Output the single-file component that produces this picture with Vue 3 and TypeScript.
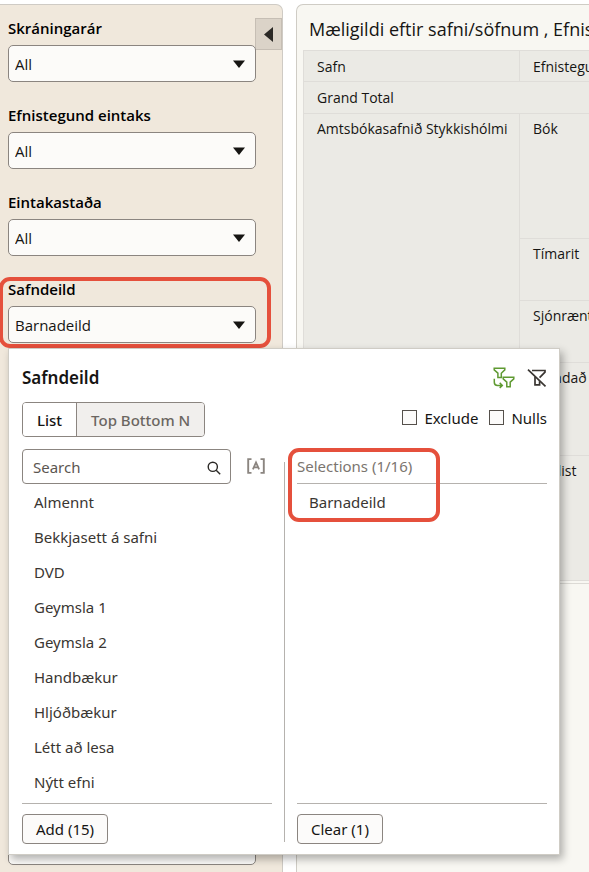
<script setup lang="ts">
import { ref } from 'vue'

interface Filter {
  id: string
  label: string
  value: string
}

interface MaterialRow {
  name: string
  span: number
}

const filters: Filter[] = [
  { id: 'year', label: 'Skráningarár', value: 'All' },
  { id: 'material', label: 'Efnistegund eintaks', value: 'All' },
  { id: 'status', label: 'Eintakastaða', value: 'All' },
]

const materials: MaterialRow[] = [
  { name: 'Bók', span: 4 },
  { name: 'Tímarit', span: 2 },
  { name: 'Sjónrænt', span: 2 },
  { name: 'Blandað efni', span: 3 },
  { name: 'Tónlist', span: 4 },
]

const available: string[] = [
  'Almennt',
  'Bekkjasett á safni',
  'DVD',
  'Geymsla 1',
  'Geymsla 2',
  'Handbækur',
  'Hljóðbækur',
  'Létt að lesa',
  'Nýtt efni',
]

const search = ref('')
const exclude = ref(false)
const nulls = ref(false)
const mode = ref<'list' | 'top'>('list')
</script>

<template>
  <div class="page">
    <aside class="sidebar">
      <button class="collapse" type="button" aria-label="Collapse">
        <svg width="9" height="15" viewBox="0 0 9 15"><path d="M9 0v15L0 7.5z" fill="#2b2926" /></svg>
      </button>

      <div v-for="f in filters" :key="f.id" class="field">
        <label :for="f.id">{{ f.label }}</label>
        <div class="select">
          <select :id="f.id">
            <option>{{ f.value }}</option>
          </select>
          <svg width="12" height="8" viewBox="0 0 12 8"><path d="M0 0.5h12L6 8z" fill="#161513" /></svg>
        </div>
      </div>

      <div class="field active">
        <label for="section">Safndeild</label>
        <div class="select">
          <select id="section">
            <option>Barnadeild</option>
          </select>
          <svg width="12" height="8" viewBox="0 0 12 8"><path d="M0 0.5h12L6 8z" fill="#161513" /></svg>
        </div>

        <section class="popover">
          <header class="pop-head">
            <h2>Safndeild</h2>
            <div class="tools">
              <button type="button" aria-label="Limit values">
                <svg width="22" height="22" viewBox="0 0 22 22" fill="none" stroke="#5f9a32" stroke-width="1.5">
                  <path d="M1.2 1.3h10.6v1.6L8.3 6.2v4.4H4.9V6.2L1.2 2.9z" />
                  <path d="M10.2 10.3h10.6v1.6l-3.6 3.3v4.6h-3.4v-4.6l-3.6-3.3z" />
                  <path d="M1.3 11.8v3.4q0 3.2 3.2 3.2h4.6M6.7 15.9l2.6 2.5-2.6 2.5" />
                </svg>
              </button>
              <button type="button" aria-label="Disable filter">
                <svg width="20" height="20" viewBox="0 0 20 20" fill="none" stroke="#3a3632" stroke-width="1.7">
                  <path d="M5 2.5h13v1.6l-5.4 5.6" />
                  <path d="M8 8.8v8.1h4.6v-3.6" />
                  <path d="M1 1.6l17.5 16.8" />
                </svg>
              </button>
            </div>
          </header>

          <div class="options">
            <div class="toggle">
              <button type="button" :class="{ on: mode === 'list' }" @click="mode = 'list'">List</button>
              <button type="button" :class="{ on: mode === 'top' }" @click="mode = 'top'">Top Bottom N</button>
            </div>
            <div class="checks">
              <label><input v-model="exclude" type="checkbox" />Exclude</label>
              <label><input v-model="nulls" type="checkbox" />Nulls</label>
            </div>
          </div>

          <div class="columns">
            <div class="column">
              <div class="search-row">
                <div class="search">
                  <input v-model="search" type="text" placeholder="Search" aria-label="Search" />
                  <svg width="14" height="14" viewBox="0 0 14 14" fill="none" stroke="#2b2926" stroke-width="1.4">
                    <circle cx="5.8" cy="5.8" r="4.6" />
                    <path d="M9.2 9.2l4 4" />
                  </svg>
                </div>
                <button class="match" type="button" aria-label="Match case">
                  <svg width="18" height="16" viewBox="0 0 18 16" fill="none" stroke="#8b8580">
                    <path d="M4.5 1.1H1.2v13.8h3.3M13.5 1.1h3.3v13.8h-3.3" stroke-width="1.9" />
                    <path d="M5.9 11.4L9 4.4l3.1 7M7 9.3h4" stroke-width="1.8" />
                  </svg>
                </button>
              </div>
              <ul class="list">
                <li v-for="item in available" :key="item">{{ item }}</li>
              </ul>
              <button class="action" type="button">Add (15)</button>
            </div>
            <div class="divider"></div>
            <div class="column">
              <h3>Selections (1/16)</h3>
              <ul class="list">
                <li>Barnadeild</li>
              </ul>
              <button class="action" type="button">Clear (1)</button>
              <span class="mark mark-selection"></span>
            </div>
          </div>
        </section>
        <span class="mark mark-field"></span>
      </div>

      <div class="select last">
        <select aria-label="Filter">
          <option></option>
        </select>
      </div>
    </aside>

    <main class="report">
      <h1>Mæligildi eftir safni/söfnum , Efnistegund</h1>
      <div class="table-wrap">
        <table>
          <thead>
            <tr>
              <th class="lib">Safn</th>
              <th>Efnistegund</th>
            </tr>
          </thead>
          <tbody>
            <tr>
              <td colspan="2">Grand Total</td>
            </tr>
            <tr v-for="(m, i) in materials" :key="m.name" class="group" :class="'rows-' + m.span">
              <td v-if="i === 0" :rowspan="materials.length">Amtsbókasafnið Stykkishólmi</td>
              <td>{{ m.name }}</td>
            </tr>
          </tbody>
        </table>
      </div>
    </main>
  </div>
</template>

<style>
body {
  background: #fff;
}
</style>

<style scoped>
* {
  box-sizing: border-box;
}

.page {
  display: flex;
  gap: 13px;
  min-height: 100vh;
  padding-top: 4px;
  overflow: hidden;
  font-family: 'Open Sans', 'Noto Sans', sans-serif;
  font-size: 14px;
  color: #161513;
}

button,
input,
select {
  font: inherit;
  color: inherit;
  margin: 0;
}

button {
  padding: 0;
  border: 0;
  background: none;
  cursor: pointer;
}

h1,
h2,
h3,
ul {
  margin: 0;
  padding: 0;
}

svg {
  display: block;
}

.sidebar {
  position: relative;
  flex: none;
  display: flex;
  flex-direction: column;
  gap: 20px;
  width: 283px;
  padding: 10px 26px 7px 8px;
  background: #f0e8dc;
  border: 1px solid #cfcbc5;
  border-width: 1px 1px 0 0;
  border-radius: 0 7px 0 0;
}

.collapse {
  position: absolute;
  top: 13px;
  right: 0;
  display: grid;
  place-items: center;
  width: 27px;
  height: 32px;
  background: #dbd3c8;
  border: 1px solid #c6beb4;
}

.field {
  position: relative;
}

.field > label {
  display: block;
  height: 30px;
  line-height: 26px;
  font-size: 15px;
  font-weight: 600;
  color: #000;
}

.select {
  display: grid;
  align-items: center;
}

.select > * {
  grid-area: 1 / 1;
}

.select > svg {
  justify-self: end;
  margin-right: 11px;
  pointer-events: none;
}

.select select {
  appearance: none;
  width: 100%;
  height: 37px;
  padding: 0 30px 0 6px;
  font-size: 15px;
  background: #fcfbf9;
  border: 1px solid #8b8580;
  border-radius: 5px;
}

.last {
  margin-top: auto;
}

.mark {
  position: absolute;
  border: 4px solid #e5503c;
  border-radius: 11px;
  pointer-events: none;
}

.mark-field {
  inset: 1px -15px -5px -9px;
}

.mark-selection {
  top: -1px;
  left: -9px;
  width: 152px;
  height: 74px;
}

.popover {
  position: absolute;
  z-index: 2;
  top: 100%;
  left: 0;
  width: calc(100vw - 37px);
  max-width: 552px;
  margin-top: 5px;
  padding: 16px 12px 10px 13px;
  font-family: 'Noto Sans', 'Open Sans', sans-serif;
  background: #fff;
  border: 1px solid #cfccc5;
  box-shadow: 3px 4px 8px rgba(0, 0, 0, 0.3);
}

.pop-head {
  display: flex;
  align-items: center;
  justify-content: space-between;
  height: 26px;
}

h2 {
  font-size: 17px;
  font-weight: 600;
  line-height: 26px;
}

.tools {
  display: flex;
  align-items: center;
  gap: 12px;
}

.options {
  display: flex;
  align-items: center;
  justify-content: space-between;
  margin: 11px 0 12px;
}

.toggle {
  display: flex;
  height: 35px;
  border: 1px solid #8b8580;
  border-radius: 4px;
  overflow: hidden;
}

.toggle button {
  padding: 0 14px;
  font-size: 15px;
  font-weight: 500;
  color: #6b6661;
  background: #f1efed;
}

.toggle button + button {
  border-left: 1px solid #8b8580;
}

.toggle .on {
  color: #161513;
  background: #fff;
}

.checks {
  display: flex;
  gap: 11px;
  margin-bottom: 4px;
  font-size: 15px;
}

.checks label {
  display: flex;
  align-items: center;
  gap: 7px;
}

.checks input {
  appearance: none;
  width: 15px;
  height: 15px;
  background: #fcfbfa;
  border: 1px solid #55504b;
}

.checks input:checked {
  background: #55504b;
}

.columns {
  display: grid;
  grid-template-columns: 1fr 1px 1fr;
  gap: 12px;
}

.column {
  position: relative;
  min-width: 0;
}

.divider {
  margin: 13px 0 2px;
  background: #b5b2ae;
}

.search-row {
  display: flex;
  align-items: center;
  gap: 16px;
}

.search {
  display: grid;
  flex: 1;
  align-items: center;
}

.search > * {
  grid-area: 1 / 1;
}

.search input {
  width: 100%;
  height: 35px;
  padding: 0 32px 0 10px;
  font-size: 15px;
  background: #fff;
  border: 1px solid #8b8580;
  border-radius: 4px;
}

.search input::placeholder {
  color: #5b5651;
  opacity: 1;
}

.search svg {
  justify-self: end;
  margin: 3px 10px 0 0;
  pointer-events: none;
}

.match {
  margin: 0 7px 2px 0;
}

h3 {
  height: 35px;
  line-height: 35px;
  font-size: 15px;
  font-weight: 400;
  color: #7b756f;
  border-bottom: 1px solid #b5b2ae;
}

.list {
  height: 320px;
  margin-bottom: 10px;
  padding-top: 1px;
  list-style: none;
  border-bottom: 1px solid #b5b2ae;
}

.list li {
  padding-left: 12px;
  font-size: 15px;
  line-height: 35px;
  color: #3a3632;
}

.action {
  display: block;
  height: 30px;
  padding: 0 13px;
  font-size: 15px;
  background: #fcfbfa;
  border: 1px solid #8b8580;
  border-radius: 4px;
}

.report {
  flex: 1;
  min-width: 0;
  padding-left: 6px;
  background: #f8f7f2;
  border: 1px solid #cfccc5;
  border-width: 1px 0 0 1px;
  border-radius: 7px 0 0 0;
  overflow: hidden;
}

h1 {
  height: 45px;
  padding: 2px 0 0 6px;
  font-size: 18px;
  font-weight: 400;
  line-height: 45px;
  white-space: nowrap;
}

.table-wrap {
  width: max-content;
  min-width: 100%;
  padding-bottom: 2px;
  border-bottom: 1px solid #dcdad5;
}

table {
  width: 100%;
  border-collapse: collapse;
  background: #ebeae5;
  font-size: 14px;
}

th,
td {
  padding: 2px 10px 0 13px;
  font-weight: 400;
  line-height: 28px;
  text-align: left;
  vertical-align: top;
  white-space: nowrap;
  border: 1px solid #dfddd9;
}

th {
  height: 31px;
}

td {
  height: 32px;
}

.group td {
  padding-top: 1px;
}

.lib {
  width: 216px;
}

.rows-2 {
  height: 62px;
}

.rows-3 {
  height: 93px;
}

.rows-4 {
  height: 125px;
}
</style>
